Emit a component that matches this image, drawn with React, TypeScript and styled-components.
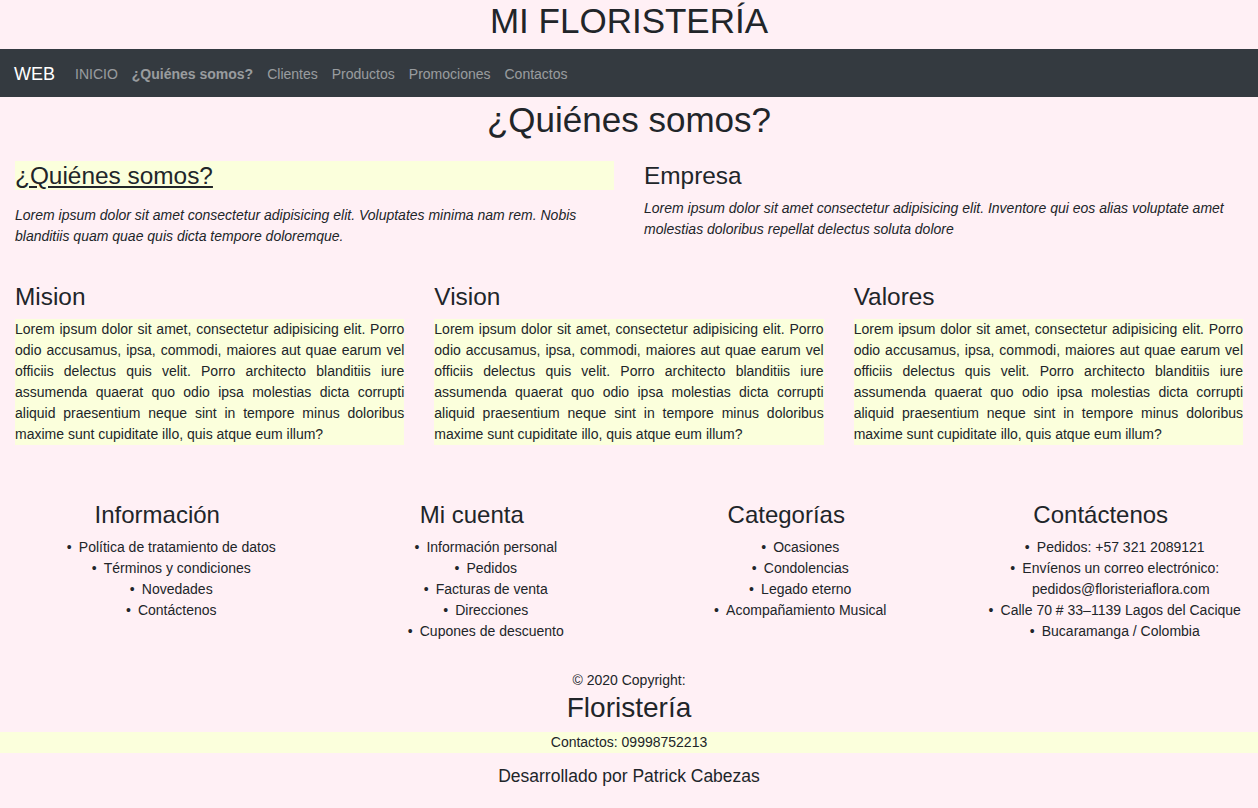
import React from 'react';
import styled, { createGlobalStyle } from 'styled-components';

const COLOR = {
  BG: '#fff0f5',
  TEXT: '#212529',
  DARK: '#343a40',
  HIGHLIGHT: '#fbffdc',
  NAV_LINK: 'rgba(255, 255, 255, 0.5)',
};

const GlobalStyle = createGlobalStyle`
  html, body {
    margin: 0;
    padding: 0;
    background-color: ${COLOR.BG};
  }
  body {
    font-family: "Liberation Sans", Arial, sans-serif;
    font-size: 14px;
    line-height: 21px;
    color: ${COLOR.TEXT};
  }
  * {
    box-sizing: border-box;
  }
`;

const navLinks = ['INICIO', '¿Quiénes somos?', 'Clientes', 'Productos', 'Promociones', 'Contactos'];

const lorem =
  'Lorem ipsum dolor sit amet, consectetur adipisicing elit. Porro odio accusamus, ipsa, commodi, maiores aut quae earum vel officiis delectus quis velit. Porro architecto blanditiis iure assumenda quaerat quo odio ipsa molestias dicta corrupti aliquid praesentium neque sint in tempore minus doloribus maxime sunt cupiditate illo, quis atque eum illum?';

const footerCols = [
  {
    title: 'Información',
    items: ['Política de tratamiento de datos', 'Términos y condiciones', 'Novedades', 'Contáctenos'],
  },
  {
    title: 'Mi cuenta',
    items: ['Información personal', 'Pedidos', 'Facturas de venta', 'Direcciones', 'Cupones de descuento'],
  },
  {
    title: 'Categorías',
    items: ['Ocasiones', 'Condolencias', 'Legado eterno', 'Acompañamiento Musical'],
  },
  {
    title: 'Contáctenos',
    items: [
      'Pedidos: +57 321 2089121',
      'Envíenos un correo electrónico: pedidos@floristeriaflora.com',
      'Calle 70 # 33–1139 Lagos del Cacique',
      'Bucaramanga / Colombia',
    ],
  },
];

export default function App() {
  return (
    <>
      <GlobalStyle />
      <SiteTitle>MI FLORISTERÍA</SiteTitle>
      <Navbar>
        <Brand>WEB</Brand>
        <NavList>
          {navLinks.map((link) => (
            <NavLink key={link} $active={link === '¿Quiénes somos?'}>
              {link}
            </NavLink>
          ))}
        </NavList>
      </Navbar>

      <PageTitle>¿Quiénes somos?</PageTitle>

      <TwoCols>
        <Col>
          <SectionTitle $highlight $underline>¿Quiénes somos?</SectionTitle>
          <Intro $gap={15}>
            Lorem ipsum dolor sit amet consectetur adipisicing elit. Voluptates minima nam rem. Nobis
            blanditiis quam quae quis dicta tempore doloremque.
          </Intro>
        </Col>
        <Col>
          <SectionTitle>Empresa</SectionTitle>
          <Intro $gap={8}>
            Lorem ipsum dolor sit amet consectetur adipisicing elit. Inventore qui eos alias voluptate
            amet molestias doloribus repellat delectus soluta dolore
          </Intro>
        </Col>
      </TwoCols>

      <ThreeCols>
        {['Mision', 'Vision', 'Valores'].map((title) => (
          <Col key={title}>
            <SectionTitle>{title}</SectionTitle>
            <Justified>{lorem}</Justified>
          </Col>
        ))}
      </ThreeCols>

      <FooterCols>
        {footerCols.map((col) => (
          <Col key={col.title}>
            <FooterTitle>{col.title}</FooterTitle>
            <FooterList>
              {col.items.map((item) => (
                <FooterItem key={item}>{item}</FooterItem>
              ))}
            </FooterList>
          </Col>
        ))}
      </FooterCols>

      <Bottom>
        <Copyright>© 2020 Copyright:</Copyright>
        <BrandName>Floristería</BrandName>
      </Bottom>
      <ContactBand>Contactos: 09998752213</ContactBand>
      <Credits>Desarrollado por Patrick Cabezas</Credits>
    </>
  );
}

const SiteTitle = styled.h1`
  margin: 0 0 7px;
  font-size: 35px;
  line-height: 42px;
  font-weight: 400;
  text-align: center;
`;

const Navbar = styled.nav`
  display: flex;
  align-items: center;
  height: 48px;
  padding: 2px 14px 0;
  background-color: ${COLOR.DARK};
`;

const Brand = styled.div`
  margin-right: 13px;
  font-size: 18px;
  line-height: 27px;
  color: #ffffff;
`;

const NavList = styled.ul`
  display: flex;
  margin: 0;
  padding: 0;
  list-style: none;
`;

const NavLink = styled.li<{ $active?: boolean }>`
  padding: 0 7px;
  font-size: 14px;
  color: ${COLOR.NAV_LINK};
  font-weight: ${(p) => (p.$active ? 700 : 400)};
`;

const PageTitle = styled.h2`
  margin: 2px 0 20px;
  font-size: 35px;
  line-height: 42px;
  font-weight: 400;
  text-align: center;
`;

const TwoCols = styled.div`
  display: grid;
  grid-template-columns: repeat(2, 1fr);
`;

const ThreeCols = styled.div`
  display: grid;
  grid-template-columns: repeat(3, 1fr);
  margin-top: 35px;
`;

const FooterCols = styled.div`
  display: grid;
  grid-template-columns: repeat(4, 1fr);
  margin-top: 56px;
`;

const Col = styled.div`
  padding: 0 15px;
  min-width: 0;
`;

const SectionTitle = styled.h4<{ $highlight?: boolean; $underline?: boolean }>`
  margin: 0;
  padding-top: 1px;
  font-size: 24.4px;
  line-height: 28px;
  font-weight: 400;
  background-color: ${(p) => (p.$highlight ? COLOR.HIGHLIGHT : 'transparent')};
  text-decoration: ${(p) => (p.$underline ? 'underline' : 'none')};
`;

const Intro = styled.p<{ $gap: number }>`
  margin: ${(p) => p.$gap}px 0 0;
  font-style: italic;
`;

const Justified = styled.p`
  margin: 8px 0 0;
  text-align: justify;
  background-color: ${COLOR.HIGHLIGHT};
`;

const FooterTitle = styled.h4`
  margin: 0 0 8px;
  font-size: 24px;
  line-height: 28px;
  font-weight: 400;
  text-align: center;
`;

const FooterList = styled.ul`
  margin: 0;
  padding-left: 40px;
  text-align: center;
  list-style: none;
`;

const FooterItem = styled.li`
  &::before {
    content: '•';
    display: inline-block;
    width: 0;
    position: relative;
    left: -12px;
  }
`;

const Bottom = styled.div`
  margin-top: 28px;
  text-align: center;
`;

const Copyright = styled.div`
  font-size: 14px;
`;

const BrandName = styled.h3`
  margin: 0 0 7px;
  font-size: 28px;
  line-height: 33.6px;
  font-weight: 400;
`;

const ContactBand = styled.div`
  background-color: ${COLOR.HIGHLIGHT};
  text-align: center;
`;

const Credits = styled.div`
  margin-top: 10px;
  font-size: 17.5px;
  line-height: 27px;
  text-align: center;
`;
